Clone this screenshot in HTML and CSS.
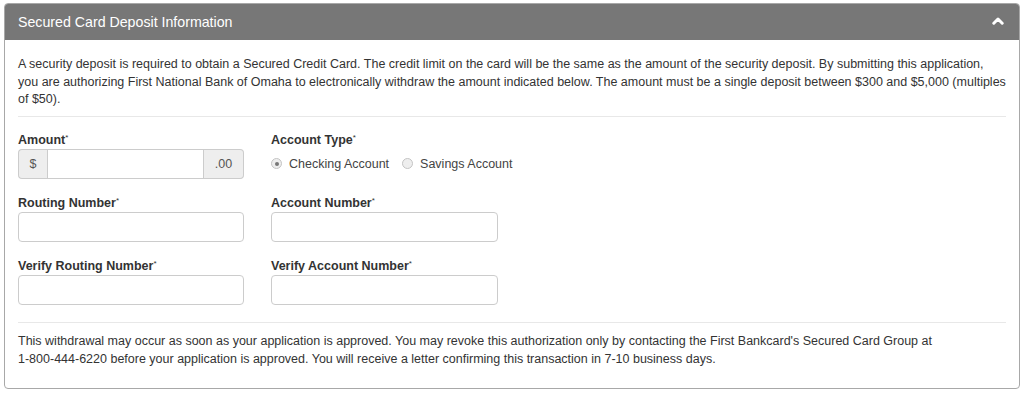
FILE: index.html
```html
<!DOCTYPE html>
<html lang="en">
<head>
    <meta charset="UTF-8">
    <title>Secured Card Deposit Information</title>
    <link rel="stylesheet" href="styles.css">
</head>
<body>
    <div class="panel">
        <div class="panel-heading">
            <span>Secured Card Deposit Information</span>
            <svg class="chevron" width="12" height="8" viewBox="0 0 12 8">
                <path d="M1.8 6.2 L6 2 L10.2 6.2" fill="none" stroke="#fff" stroke-width="3" stroke-linejoin="round" stroke-linecap="round"/>
            </svg>
        </div>
        <div class="panel-body">
            <p class="intro">A security deposit is required to obtain a Secured Credit Card. The credit limit on the card will be the same as the amount of the security deposit. By submitting this application, you are authorizing First National Bank of Omaha to electronically withdraw the amount indicated below. The amount must be a single deposit between $300 and $5,000 (multiples of $50).</p>
            <hr>
            <div class="form-grid">
                <div class="field">
                    <label>Amount<sup>*</sup></label>
                    <div class="input-group">
                        <span class="addon">$</span>
                        <input type="text">
                        <span class="addon">.00</span>
                    </div>
                </div>
                <div class="field">
                    <label>Account Type<sup>*</sup></label>
                    <div class="radios">
                        <span class="radio"><span class="dot checked"></span>Checking Account</span>
                        <span class="radio"><span class="dot"></span>Savings Account</span>
                    </div>
                </div>
                <div class="field">
                    <label>Routing Number<sup>*</sup></label>
                    <input type="text">
                </div>
                <div class="field">
                    <label>Account Number<sup>*</sup></label>
                    <input type="text">
                </div>
                <div class="field">
                    <label>Verify Routing Number<sup>*</sup></label>
                    <input type="text">
                </div>
                <div class="field">
                    <label>Verify Account Number<sup>*</sup></label>
                    <input type="text">
                </div>
            </div>
            <hr class="form-end">
            <p class="note">This withdrawal may occur as soon as your application is approved. You may revoke this authorization only by contacting the First Bankcard's Secured Card Group at<br>1-800-444-6220 before your application is approved. You will receive a letter confirming this transaction in 7-10 business days.</p>
        </div>
    </div>
</body>
</html>
```

FILE: styles.css
```css
* {
    margin: 0;
    padding: 0;
    box-sizing: border-box;
}

body {
    font-family: 'Liberation Sans', Arial, sans-serif;
    font-size: 12.5px;
    color: #333;
    background-color: #fff;
    padding: 3px 4px 0 4px;
}

.panel {
    border: 1px solid #a8a8a8;
    border-radius: 4px;
    height: 386px;
    overflow: hidden;
}

.panel-heading {
    background-color: #777;
    color: #fff;
    height: 36px;
    display: flex;
    align-items: center;
    justify-content: space-between;
    padding: 0 15px 0 13px;
    font-size: 14.2px;
}

.chevron {
    margin-top: -2px;
}

.panel-body {
    padding: 16px 13px 0 13px;
}

.intro {
    line-height: 17.5px;
}

.note {
    line-height: 18px;
    padding-top: 9px;
}

hr {
    border: none;
    border-top: 1px solid #e8e8e8;
    margin: 7px 0 0 0;
}

hr.form-end {
    margin-top: 1px;
}

.form-grid {
    display: grid;
    grid-template-columns: 226px 227px;
    column-gap: 27px;
    padding-top: 15px;
}

.field label {
    display: block;
    font-weight: bold;
    line-height: 16px;
    height: 16px;
    margin-bottom: 1px;
}

label sup {
    font-size: 8px;
    font-weight: normal;
    line-height: 0;
    vertical-align: 4px;
}

input {
    width: 100%;
    height: 30px;
    border: 1px solid #ccc;
    border-radius: 4px;
    background-color: #fff;
    font-family: inherit;
    font-size: 13px;
    margin-bottom: 16px;
}

.input-group {
    display: flex;
    margin-bottom: 16px;
}

.input-group input {
    margin-bottom: 0;
    border-radius: 0;
    flex: 1;
    min-width: 0;
}

.addon {
    height: 30px;
    display: flex;
    align-items: center;
    justify-content: center;
    background-color: #eee;
    border: 1px solid #ccc;
    color: #555;
}

.addon:first-child {
    width: 29px;
    border-right: none;
    border-radius: 4px 0 0 4px;
}

.addon:last-child {
    width: 40px;
    border-left: none;
    border-radius: 0 4px 4px 0;
}

.radios {
    display: flex;
    height: 30px;
    align-items: flex-start;
    padding-top: 8px;
    white-space: nowrap;
}

.radio {
    display: flex;
    align-items: center;
    margin-right: 13px;
    color: #444;
}

.dot {
    width: 11px;
    height: 11px;
    border-radius: 50%;
    border: 1px solid #c4c4c4;
    background-color: #eee;
    margin-right: 7px;
    position: relative;
}

.dot.checked::after {
    content: '';
    position: absolute;
    left: 2.5px;
    top: 2.5px;
    width: 4px;
    height: 4px;
    border-radius: 50%;
    background-color: #777;
}
```
